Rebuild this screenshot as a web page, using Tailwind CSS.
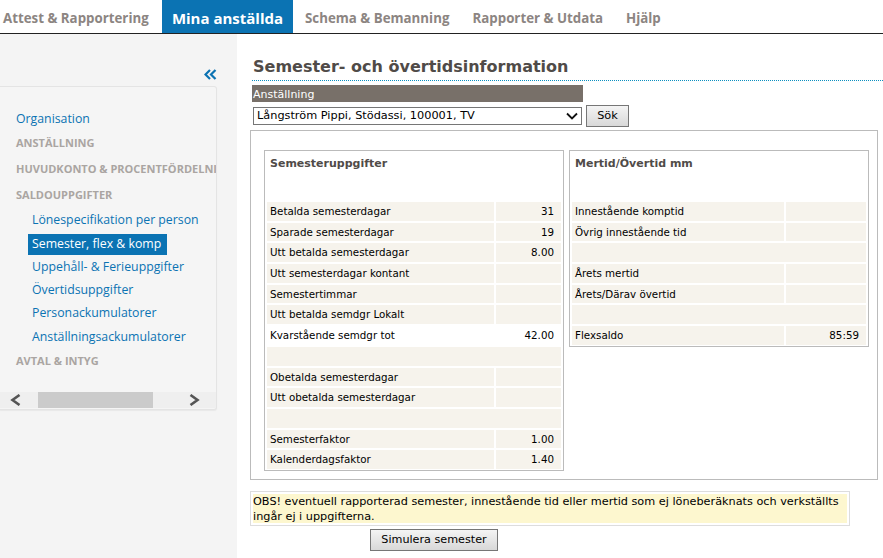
<!DOCTYPE html>
<html lang="sv">
  <head>
    <meta charset="utf-8" />
    <title>Semester- och övertidsinformation</title>
    <script src="https://cdn.jsdelivr.net/npm/@tailwindcss/browser@4"></script>
  </head>
  <body class="bg-white font-['DejaVu_Sans',sans-serif] text-[11px] text-black overflow-hidden">
    <!-- Top tabs -->
    <nav class="h-[34px] border-b border-[#222] flex font-['Open_Sans',sans-serif] font-bold text-[13.3px] text-[#8c8582]">
      <a class="w-[162px] pl-[3px] leading-[36px]">Attest &amp; Rapportering</a>
      <a class="w-[131px] h-[33px] bg-[#0b73b3] text-white text-[15px] text-center leading-[36px]">Mina anställda</a>
      <a class="ml-[12px] w-[167.5px] leading-[36px]">Schema &amp; Bemanning</a>
      <a class="w-[153.5px] leading-[36px]">Rapporter &amp; Utdata</a>
      <a class="leading-[36px]">Hjälp</a>
    </nav>

    <div class="flex h-[524px]">
      <!-- Sidebar -->
      <aside class="w-[237px] shrink-0 bg-[#f4f4f4] font-['Open_Sans',sans-serif] pt-[30px]">
        <div class="h-[22px] w-[217px] flex justify-end">
          <svg class="w-[13px] h-[11px] mt-[5px]" viewBox="0 0 13 11" fill="none" stroke="#0b73b3" stroke-width="2.2">
            <path d="M6 1 1.5 5.5 6 10M11.5 1 7 5.5 11.5 10" />
          </svg>
        </div>
        <div class="w-[217px] h-[324px] border border-[#e4e4e4] border-l-0 rounded-r-[3px] bg-[#f5f5f5] flex flex-col shadow-[0_1px_1px_#e8e8e8]">
          <div class="flex-1 overflow-hidden pt-[22px] text-[12.3px] text-[#0b73b3] whitespace-nowrap">
            <a class="block pl-[16px] leading-[20px]">Organisation</a>
            <div class="pl-[16px] mt-[4px] leading-[20px] text-[11px] font-bold text-[#aaa5a2]">ANSTÄLLNING</div>
            <div class="pl-[16px] mt-[6px] leading-[20px] text-[11px] font-bold text-[#aaa5a2]">HUVUDKONTO &amp; PROCENTFÖRDELNING</div>
            <div class="pl-[16px] mt-[6px] leading-[20px] text-[11px] font-bold text-[#aaa5a2]">SALDOUPPGIFTER</div>
            <a class="block pl-[32px] mt-[5px] leading-[20px]">Lönespecifikation per person</a>
            <a class="block ml-[28px] pl-[4px] mt-[4px] w-[139px] h-[21px] leading-[20px] bg-[#0b73b3] text-white">Semester, flex &amp; komp</a>
            <a class="block pl-[32px] leading-[23px]">Uppehåll- &amp; Ferieuppgifter</a>
            <a class="block pl-[32px] leading-[23px]">Övertidsuppgifter</a>
            <a class="block pl-[32px] leading-[23px]">Personackumulatorer</a>
            <a class="block pl-[32px] mt-[1px] leading-[23px]">Anställningsackumulatorer</a>
            <div class="pl-[16px] mt-[1px] leading-[24px] text-[11px] font-bold text-[#aaa5a2]">AVTAL &amp; INTYG</div>
          </div>
          <!-- Horizontal scrollbar -->
          <div class="h-[16px] bg-[#efefef] flex items-center mb-[1px]">
            <svg class="w-[38px] h-[12px] shrink-0" viewBox="0 0 38 12" fill="none" stroke="#555" stroke-width="2.6">
              <path d="M19.5 1 12.5 6l7 5" />
            </svg>
            <div class="w-[115px] h-[16px] bg-[#cbcbcb]"></div>
            <svg class="w-[63px] h-[12px] shrink-0" viewBox="0 0 63 12" fill="none" stroke="#555" stroke-width="2.6">
              <path d="m37.5 1 7 5-7 5" />
            </svg>
          </div>
        </div>
      </aside>

      <!-- Main content -->
      <main class="flex-1 relative pl-[13px] pr-[5px]">
        <h1 class="pt-[21px] h-[47px] border-b border-dotted border-[#0b8fc0] -mr-[5px] ml-[2px] pl-[1px] font-bold text-[16px] leading-[24px] text-[#504b48]">Semester- och övertidsinformation</h1>
        <div class="mt-[4px] ml-[2px] w-[331px] h-[17px] bg-[#787069] text-white leading-[20px] pl-[1px]">Anställning</div>
        <div class="ml-[3px] mt-[4px] flex items-start">
          <div class="w-[329px] h-[18px] mt-[1px] border border-[#767676] bg-white flex items-center justify-between pl-[3px] pr-[3px] text-[11.3px]">
            <span>Långström Pippi, Stödassi, 100001, TV</span>
            <svg class="w-[12px] h-[8px]" viewBox="0 0 12 8" fill="none" stroke="#111" stroke-width="1.8"><path d="m1 1.5 5 5 5-5" /></svg>
          </div>
          <button class="ml-[4px] w-[43px] h-[22px] -mt-[1px] border border-[#767676] bg-gradient-to-b from-[#f4f4f4] to-[#d8d8d8] text-[11.3px]">Sök</button>
        </div>

        <div class="mt-[3px] w-[628px] h-[350px] border border-[#bbb] pt-[19px] pl-[13px] flex items-start gap-[5px]">
          <!-- Semesteruppgifter -->
          <section class="w-[300px] h-[321px] border border-[#bbb] p-[2px]">
            <h2 class="h-[49px] pl-[3px] pt-[3px] font-bold text-[11px] leading-[16px] text-[#504b48]">Semesteruppgifter</h2>
            <div class="grid grid-cols-[227px_65px] gap-[2px] auto-rows-[18.7px] leading-[18.7px] text-[10.3px]">
              <div class="bg-[#f6f3ec] pl-[3px]">Betalda semesterdagar</div><div class="bg-[#f6f3ec] text-right pr-[7px]">31</div>
              <div class="bg-[#f6f3ec] pl-[3px]">Sparade semesterdagar</div><div class="bg-[#f6f3ec] text-right pr-[7px]">19</div>
              <div class="bg-[#f6f3ec] pl-[3px]">Utt betalda semesterdagar</div><div class="bg-[#f6f3ec] text-right pr-[7px]">8.00</div>
              <div class="bg-[#f6f3ec] pl-[3px]">Utt semesterdagar kontant</div><div class="bg-[#f6f3ec]"></div>
              <div class="bg-[#f6f3ec] pl-[3px]">Semestertimmar</div><div class="bg-[#f6f3ec]"></div>
              <div class="bg-[#f6f3ec] pl-[3px]">Utt betalda semdgr Lokalt</div><div class="bg-[#f6f3ec]"></div>
              <div class="bg-white pl-[3px]">Kvarstående semdgr tot</div><div class="bg-white text-right pr-[7px]">42.00</div>
              <div class="col-span-2 bg-[#f6f3ec]"></div>
              <div class="bg-[#f6f3ec] pl-[3px]">Obetalda semesterdagar</div><div class="bg-[#f6f3ec]"></div>
              <div class="bg-[#f6f3ec] pl-[3px]">Utt obetalda semesterdagar</div><div class="bg-[#f6f3ec]"></div>
              <div class="col-span-2 bg-[#f6f3ec]"></div>
              <div class="bg-[#f6f3ec] pl-[3px]">Semesterfaktor</div><div class="bg-[#f6f3ec] text-right pr-[7px]">1.00</div>
              <div class="bg-[#f6f3ec] pl-[3px]">Kalenderdagsfaktor</div><div class="bg-[#f6f3ec] text-right pr-[7px]">1.40</div>
            </div>
          </section>

          <!-- Mertid/Övertid -->
          <section class="w-[300px] h-[197px] border border-[#bbb] p-[2px]">
            <h2 class="h-[49px] pl-[3px] pt-[3px] font-bold text-[11px] leading-[16px] text-[#504b48]">Mertid/Övertid mm</h2>
            <div class="grid grid-cols-[212px_80px] gap-[2px] auto-rows-[18.7px] leading-[18.7px] text-[10.3px]">
              <div class="bg-[#f6f3ec] pl-[3px]">Innestående komptid</div><div class="bg-[#f6f3ec]"></div>
              <div class="bg-[#f6f3ec] pl-[3px]">Övrig innestående tid</div><div class="bg-[#f6f3ec]"></div>
              <div class="col-span-2 bg-[#f6f3ec]"></div>
              <div class="bg-[#f6f3ec] pl-[3px]">Årets mertid</div><div class="bg-[#f6f3ec]"></div>
              <div class="bg-[#f6f3ec] pl-[3px]">Årets/Därav övertid</div><div class="bg-[#f6f3ec]"></div>
              <div class="col-span-2 bg-[#f6f3ec]"></div>
              <div class="bg-[#f6f3ec] pl-[3px]">Flexsaldo</div><div class="bg-[#f6f3ec] text-right pr-[7px]">85:59</div>
            </div>
          </section>
        </div>

        <div class="mt-[11px] w-[600px] h-[35px] border border-[#ddd] p-[2px]">
          <p class="h-full bg-[#fdf7cf] text-[11.25px] leading-[14.5px] pt-[1px]">OBS! eventuell rapporterad semester, innestående tid eller mertid som ej löneberäknats och verkställts ingår ej i uppgifterna.</p>
        </div>
        <button class="block ml-[120px] mt-[3px] w-[128px] h-[22px] border border-[#767676] bg-gradient-to-b from-[#f4f4f4] to-[#d8d8d8] text-[11.2px]">Simulera semester</button>
      </main>
    </div>
  </body>
</html>
